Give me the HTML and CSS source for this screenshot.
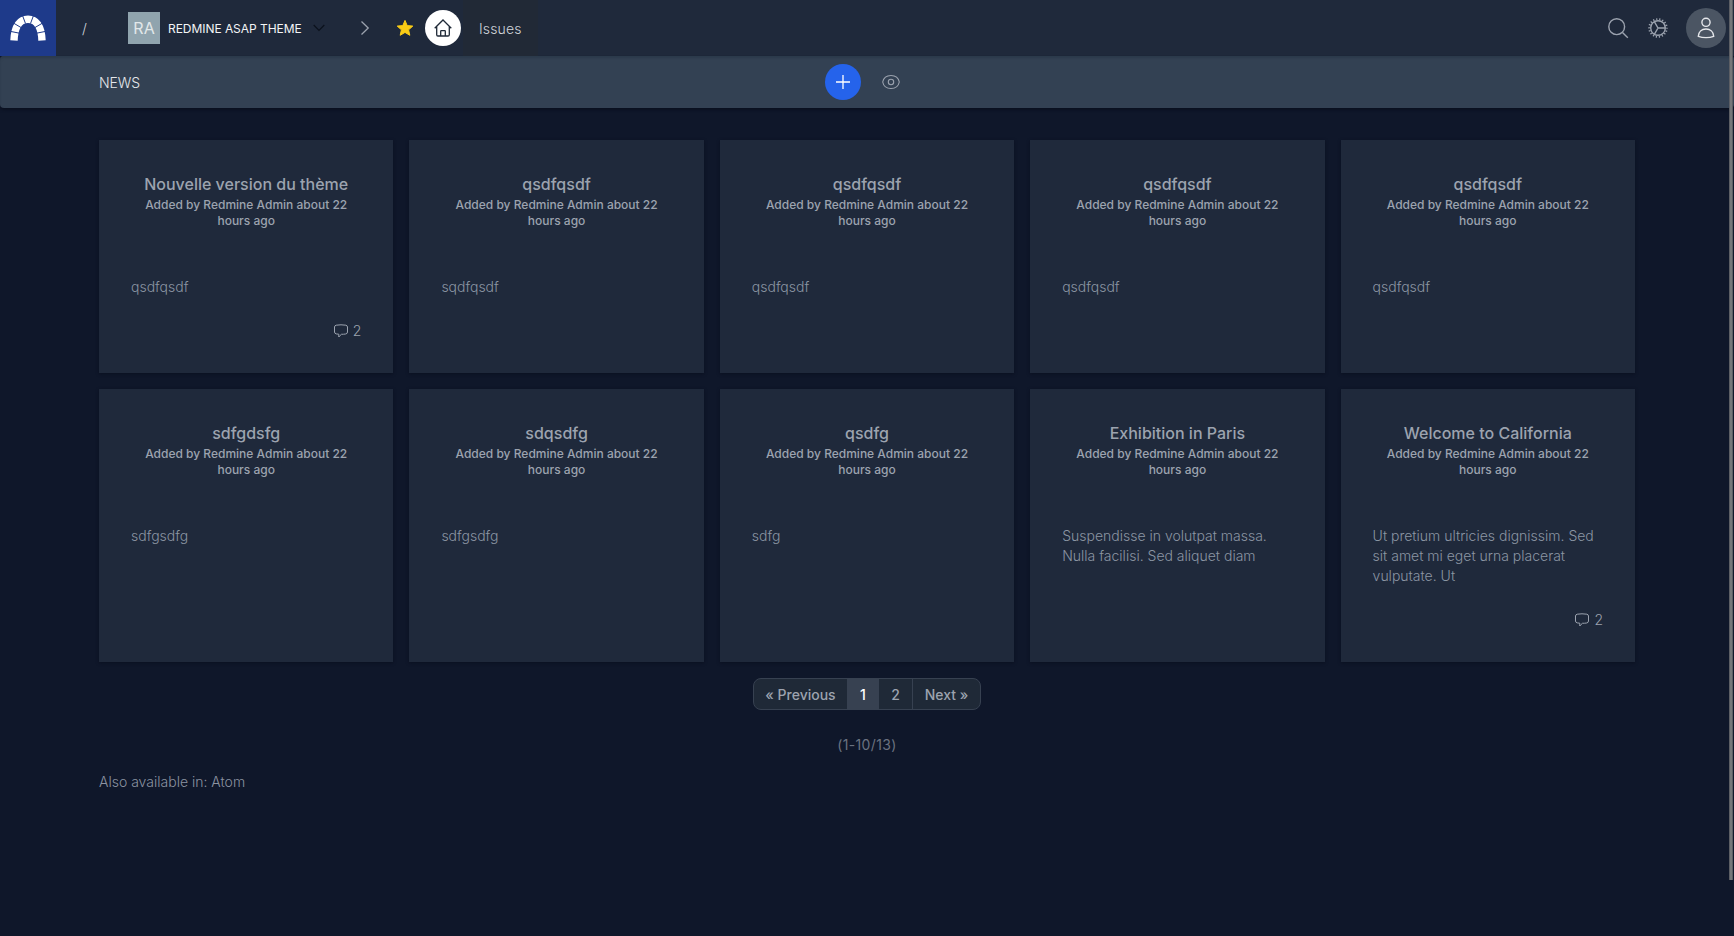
FILE: index.html
```html
<!DOCTYPE html>
<html lang="en">
<head>
<meta charset="utf-8">
<title>News - Redmine ASAP theme</title>
<link rel="stylesheet" href="styles.css">
</head>
<body>
<svg class="defs" width="0" height="0">
  <symbol id="comment" viewBox="0 0 16 16"><path d="M3.2 2.2Q8 1.4 12.8 2.2Q14.4 2.5 14.5 4V9Q14.4 10.8 12.6 11Q10.6 11.3 8.4 11.3Q7 12.5 5.8 14V11.2L3.2 10.9Q1.6 10.6 1.5 9V4Q1.6 2.5 3.2 2.2Z" fill="none" stroke="currentColor" stroke-linejoin="round"/></symbol>
</svg>
<header class="topbar">
  <a class="logo"><svg width="36" height="26" viewBox="0 0 36 26"><path d="M4 25.500C4.500 11 10 4.200 18 4.200S31.500 11 32 25.500" fill="none" stroke="#fff" stroke-width="7.400"/><path d="M0 16.300l9 1.800M3 7.800l8 4.700M12.300 0l3.200 8.500M23.700 0l-3.200 8.500M33 7.800l-8 4.700M36 16.300l-9 1.800" stroke="#1e3a8a" stroke-width="1"/></svg></a>
  <span class="slash">/</span>
  <div class="project"><span class="initials">RA</span><span class="project-name">REDMINE ASAP THEME</span>
    <svg class="chevron" width="12" height="8" viewBox="0 0 12 8"><path d="M.7 1L6 6.300 11.300 1"/></svg></div>
  <svg class="next" width="10" height="16" viewBox="0 0 10 16"><path d="M1.500 1.500L8.200 8l-6.700 6.500"/></svg>
  <svg class="star" width="18" height="18" viewBox="0 0 18 18"><path d="M9 1.400l2.200 5.200 5.600.5-4.200 3.700 1.200 5.500L9 13.400l-4.800 2.900 1.200-5.500-4.200-3.700 5.600-.5z"/></svg>
  <a class="home"><svg width="20" height="20" viewBox="0 0 20 20"><path d="M1.700 10.200L10 2l8.300 8.200M3.700 8.500v8.200q0 1.300 1.300 1.300h10q1.300 0 1.300-1.300V8.500M7.700 18v-4.700q0-.6.6-.6h3.400q.6 0 .6.600V18"/></svg></a>
  <a class="tab">Issues</a>
  <div class="tools">
    <svg width="24" height="24" viewBox="0 0 24 24"><circle cx="10.700" cy="10.700" r="7.900"/><path d="M16.500 16.500l5.300 5.300"/></svg>
    <svg width="24" height="24" viewBox="0 0 24 24"><circle cx="12" cy="12" r="7.300"/><circle class="teeth" cx="12" cy="12" r="8.800"/><path d="M12 12h7.300M12 12L8.350 5.700M12 12l-3.650 6.300"/></svg>
    <a class="avatar"><svg width="22" height="24" viewBox="0 0 22 24"><circle cx="11" cy="6.300" r="4.100"/><path d="M3.300 20.300c.2-4.600 3.400-7.300 7.700-7.300s7.500 2.700 7.700 7.300q-3.400 1.300-7.700 1.300t-7.700-1.300z"/></svg></a>
  </div>
</header>
<div class="subbar">
  <h1 class="page-name">NEWS</h1>
  <a class="add"><svg width="16" height="16" viewBox="0 0 16 16"><path d="M8 1v14M1 8h14"/></svg></a>
  <svg class="eye" width="20" height="16" viewBox="0 0 20 16"><path d="M1.700 8C2.500 4 5.500 1.500 10 1.500S17.500 4 18.300 8c-.8 4-3.800 6.500-8.300 6.500S2.500 12 1.700 8z"/><circle cx="10" cy="8" r="2.700"/></svg>
</div>
<main class="content">
  <div class="grid">
    <article class="card"><h2>Nouvelle version du thème</h2><p class="meta">Added by Redmine Admin about 22 hours ago</p><p class="text">qsdfqsdf</p><p class="comments"><svg width="16" height="16"><use href="#comment"/></svg>2</p></article>
    <article class="card"><h2>qsdfqsdf</h2><p class="meta">Added by Redmine Admin about 22 hours ago</p><p class="text">sqdfqsdf</p></article>
    <article class="card"><h2>qsdfqsdf</h2><p class="meta">Added by Redmine Admin about 22 hours ago</p><p class="text">qsdfqsdf</p></article>
    <article class="card"><h2>qsdfqsdf</h2><p class="meta">Added by Redmine Admin about 22 hours ago</p><p class="text">qsdfqsdf</p></article>
    <article class="card"><h2>qsdfqsdf</h2><p class="meta">Added by Redmine Admin about 22 hours ago</p><p class="text">qsdfqsdf</p></article>
    <article class="card"><h2>sdfgdsfg</h2><p class="meta">Added by Redmine Admin about 22 hours ago</p><p class="text">sdfgsdfg</p></article>
    <article class="card"><h2>sdqsdfg</h2><p class="meta">Added by Redmine Admin about 22 hours ago</p><p class="text">sdfgsdfg</p></article>
    <article class="card"><h2>qsdfg</h2><p class="meta">Added by Redmine Admin about 22 hours ago</p><p class="text">sdfg</p></article>
    <article class="card"><h2>Exhibition in Paris</h2><p class="meta">Added by Redmine Admin about 22 hours ago</p><p class="text">Suspendisse in volutpat massa. Nulla facilisi. Sed aliquet diam</p></article>
    <article class="card"><h2>Welcome to California</h2><p class="meta">Added by Redmine Admin about 22 hours ago</p><p class="text">Ut pretium ultricies dignissim. Sed sit amet mi eget urna placerat vulputate. Ut</p><p class="comments"><svg width="16" height="16"><use href="#comment"/></svg>2</p></article>
  </div>
  <nav class="pages"><a class="prev">« Previous</a><a class="current">1</a><a class="page">2</a><a class="following">Next »</a></nav>
  <p class="range">(1-10/13)</p>
  <p class="formats">Also available in: Atom</p>
</main>
<div class="scroll-thumb"></div>
</body>
</html>
```
FILE: styles.css
```css
* { box-sizing: border-box; }
body {
  margin: 0;
  height: 936px;
  overflow: hidden;
  background: #0f172a;
  color: #9ca3af;
  font: 300 14px/20px Inter, sans-serif;
}
h1, h2, p { margin: 0; }
svg { display: block; flex: none; fill: none; stroke: currentColor; }
.defs { position: absolute; }
.topbar { display: flex; align-items: center; height: 56px; background: #1f293b; }
.logo { display: flex; align-items: center; justify-content: center; width: 56px; height: 56px; background: #1e3a8a; }
.slash { width: 72px; padding-left: 26px; padding-top: 2px; font-size: 14px; color: #d1d5db; }
.project { display: flex; align-items: center; width: 232px; color: #f3f4f6; font-size: 12px; font-weight: 400; }
.initials { width: 32px; height: 32px; margin-right: 8px; background: #90a4ae; color: #e2e8ea; font-size: 16px; line-height: 32px; text-align: center; }
.project-name { width: 145px; padding-top: 1px; white-space: nowrap; letter-spacing: -.05px; }
.chevron { color: #0b111c; stroke-width: 1.2; }
.next { color: #9ca3af; stroke-width: 1.3; }
.star { margin-left: 26px; fill: #facc15; stroke: #facc15; stroke-linejoin: round; }
.home { display: flex; align-items: center; justify-content: center; width: 36px; height: 36px; margin-left: 11px; border-radius: 50%; background: #fff; color: #1f2937; }
.home svg { stroke-width: 1.3; }
.tab { padding: 19px 16px 17px; margin-left: 2px; background: #212936; color: #d1d5db; letter-spacing: .01em; }
.tools { display: flex; align-items: center; gap: 16px; margin-left: auto; padding-right: 8px; }
.tools svg { stroke-width: 1.4; }
.tools .teeth { stroke-width: 1.9; stroke-dasharray: 1.2 1.872; stroke-dashoffset: .6; }
.avatar { display: flex; align-items: center; justify-content: center; width: 40px; height: 40px; border-radius: 50%; background: #4b5563; color: #e5e7eb; }
.subbar { display: flex; align-items: center; height: 52px; padding-left: 99px; border-radius: 4px; background: #334153; box-shadow: inset 0 2px 2px #2c3a4b, 0 2px 3px #0a1020; }
.page-name { width: 726px; padding-top: 2px; font-size: 14px; font-weight: 300; letter-spacing: -.1px; color: #e5e7eb; }
.add { display: flex; align-items: center; justify-content: center; width: 36px; height: 36px; border-radius: 50%; background: #2563eb; color: #fff; }
.add svg { stroke-width: 1.3; }
.eye { margin-left: 20px; stroke-width: 1.1; }
.content { padding: 32px 99px 0; }
.grid { display: grid; grid-template-columns: repeat(5, 1fr); grid-template-rows: 233px 273px; gap: 16px; }
.card { display: flex; flex-direction: column; padding: 32px; background: #1f293b; box-shadow: 0 1px 3px #0a1020; }
.card h2 { font-size: 16px; line-height: 24px; font-weight: 500; text-align: center; }
.meta { padding-top: 1px; font-size: 12px; line-height: 16px; font-weight: 500; text-align: center; }
.text { margin-top: 48px; color: #8b95a3; }
.comments { display: flex; align-items: center; justify-content: flex-end; gap: 4px; margin-top: auto; }
.pages { display: flex; width: 228px; height: 32px; margin: 16px auto 0; border: 1px solid #374151; border-radius: 8px; overflow: hidden; background: #1f2937; font-weight: 500; line-height: 31px; text-align: center; }
.prev { width: 93px; }
.current { width: 32px; background: #374151; color: #fff; }
.page { width: 34px; border-right: 1px solid #374151; }
.following { flex: 1; }
.range { margin-top: 25px; text-align: center; font-weight: 400; letter-spacing: .025em; color: #6b7280; }
.formats { margin-top: 17px; color: #8b93a1; }
.scroll-thumb { position: absolute; top: 0; right: 1px; width: 4px; height: 880px; border: solid #5b5e64; border-width: 0 1px; background: #75777a; }
```
